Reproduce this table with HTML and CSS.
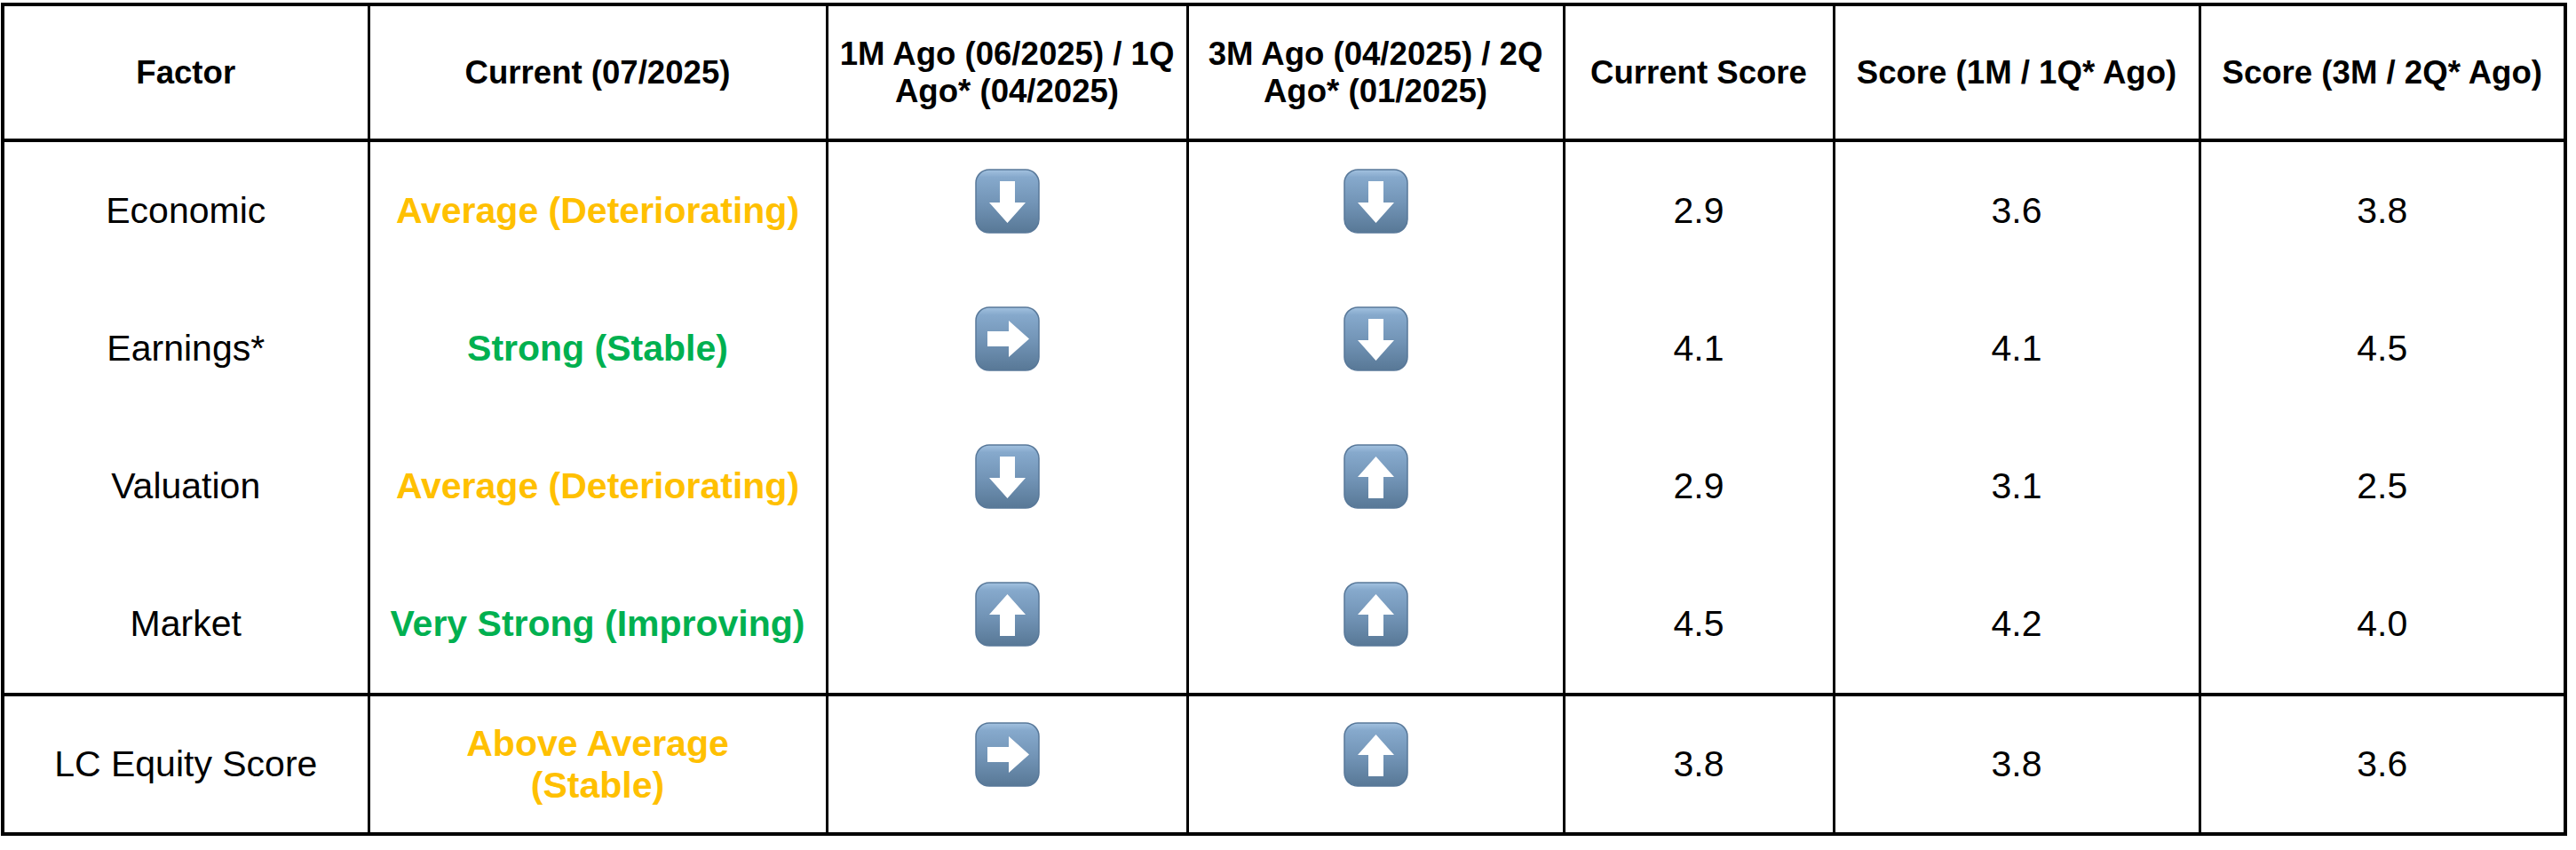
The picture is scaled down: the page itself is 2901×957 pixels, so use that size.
FILE: index.html
```html
<!DOCTYPE html>
<html lang="en">
<head>
<meta charset="utf-8">
<title>Factor Scores</title>
<link rel="stylesheet" href="styles.css">
</head>
<body>
<svg class="defs" width="0" height="0" aria-hidden="true">
  <defs>
    <linearGradient id="emojiGrad" x1="0" y1="0" x2="0" y2="1">
      <stop offset="0" stop-color="#a3c2e0"/>
      <stop offset="0.12" stop-color="#86a9cc"/>
      <stop offset="0.55" stop-color="#7193b5"/>
      <stop offset="1" stop-color="#587896"/>
    </linearGradient>
    <symbol id="box" viewBox="0 0 73 73">
      <rect x="1" y="1" width="71" height="71" rx="15" ry="15" fill="url(#emojiGrad)" stroke="#587899" stroke-width="1.5"/>
    </symbol>
  </defs>
</svg>
<div class="page">
<table class="factors">
  <colgroup>
    <col class="w-factor">
    <col class="w-current">
    <col class="w-ago1">
    <col class="w-ago2">
    <col class="w-score">
    <col class="w-score1">
    <col class="w-score2">
  </colgroup>
  <thead>
    <tr>
      <th>Factor</th>
      <th>Current (07/2025)</th>
      <th>1M Ago (06/2025) / 1Q Ago* (04/2025)</th>
      <th>3M Ago (04/2025) / 2Q Ago* (01/2025)</th>
      <th>Current Score</th>
      <th>Score (1M / 1Q* Ago)</th>
      <th>Score (3M / 2Q* Ago)</th>
    </tr>
  </thead>
  <tbody class="group">
    <tr>
      <td>Economic</td>
      <td class="avg">Average (Deteriorating)</td>
      <td><svg class="emoji" viewBox="0 0 73 73"><use href="#box"/><path d="M28 14H45V38H57L36.5 61L16 38H28Z" fill="#fff"/></svg></td>
      <td><svg class="emoji" viewBox="0 0 73 73"><use href="#box"/><path d="M28 14H45V38H57L36.5 61L16 38H28Z" fill="#fff"/></svg></td>
      <td>2.9</td>
      <td>3.6</td>
      <td>3.8</td>
    </tr>
    <tr>
      <td>Earnings*</td>
      <td class="strong">Strong (Stable)</td>
      <td><svg class="emoji" viewBox="0 0 73 73"><use href="#box"/><path d="M14 28H38V16L61 36.5L38 57V45H14Z" fill="#fff"/></svg></td>
      <td><svg class="emoji" viewBox="0 0 73 73"><use href="#box"/><path d="M28 14H45V38H57L36.5 61L16 38H28Z" fill="#fff"/></svg></td>
      <td>4.1</td>
      <td>4.1</td>
      <td>4.5</td>
    </tr>
    <tr>
      <td>Valuation</td>
      <td class="avg">Average (Deteriorating)</td>
      <td><svg class="emoji" viewBox="0 0 73 73"><use href="#box"/><path d="M28 14H45V38H57L36.5 61L16 38H28Z" fill="#fff"/></svg></td>
      <td><svg class="emoji" viewBox="0 0 73 73"><use href="#box"/><path d="M28 61H45V37H57L36.5 14L16 37H28Z" fill="#fff"/></svg></td>
      <td>2.9</td>
      <td>3.1</td>
      <td>2.5</td>
    </tr>
    <tr>
      <td>Market</td>
      <td class="strong">Very Strong (Improving)</td>
      <td><svg class="emoji" viewBox="0 0 73 73"><use href="#box"/><path d="M28 61H45V37H57L36.5 14L16 37H28Z" fill="#fff"/></svg></td>
      <td><svg class="emoji" viewBox="0 0 73 73"><use href="#box"/><path d="M28 61H45V37H57L36.5 14L16 37H28Z" fill="#fff"/></svg></td>
      <td>4.5</td>
      <td>4.2</td>
      <td>4.0</td>
    </tr>
  </tbody>
  <tbody class="total">
    <tr>
      <td>LC Equity Score</td>
      <td class="avg two-line">Above Average<br>(Stable)</td>
      <td><svg class="emoji" viewBox="0 0 73 73"><use href="#box"/><path d="M14 28H38V16L61 36.5L38 57V45H14Z" fill="#fff"/></svg></td>
      <td><svg class="emoji" viewBox="0 0 73 73"><use href="#box"/><path d="M28 61H45V37H57L36.5 14L16 37H28Z" fill="#fff"/></svg></td>
      <td>3.8</td>
      <td>3.8</td>
      <td>3.6</td>
    </tr>
  </tbody>
</table>
</div>
</body>
</html>
```

FILE: styles.css
```css
html, body {
  margin: 0;
  padding: 0;
  background: #ffffff;
}

body {
  font-family: "Liberation Sans", Arial, sans-serif;
  color: #000000;
}

.defs {
  position: absolute;
  width: 0;
  height: 0;
  overflow: hidden;
}

.page {
  padding: 3px 0 0 1px;
}

.factors {
  border-collapse: collapse;
  table-layout: fixed;
  width: 2890px;
  border: 4px solid #000;
}

.w-factor { width: 412px; }
.w-current { width: 516px; }
.w-ago1 { width: 406px; }
.w-ago2 { width: 424px; }
.w-score { width: 304px; }
.w-score1 { width: 412px; }
.w-score2 { width: 412px; }

.factors th,
.factors td {
  border-left: 3px solid #000;
  border-right: 3px solid #000;
  text-align: center;
  vertical-align: middle;
  padding: 0 10px;
}

.factors th {
  height: 149px;
  font-size: 36.6px;
  font-weight: bold;
  line-height: 42px;
  border-bottom: 4px solid #000;
}

.factors td {
  font-size: 41px;
  line-height: 47px;
  font-weight: normal;
}

.group td {
  height: 155px;
}

.total td {
  height: 153px;
  border-top: 4px solid #000;
}

.avg {
  color: #ffc000;
  font-weight: bold !important;
}

.strong {
  color: #00b050;
  font-weight: bold !important;
}

.two-line {
  line-height: 48px;
}

.emoji {
  display: block;
  width: 73px;
  height: 73px;
  margin: 0 auto 22px;
}
```
